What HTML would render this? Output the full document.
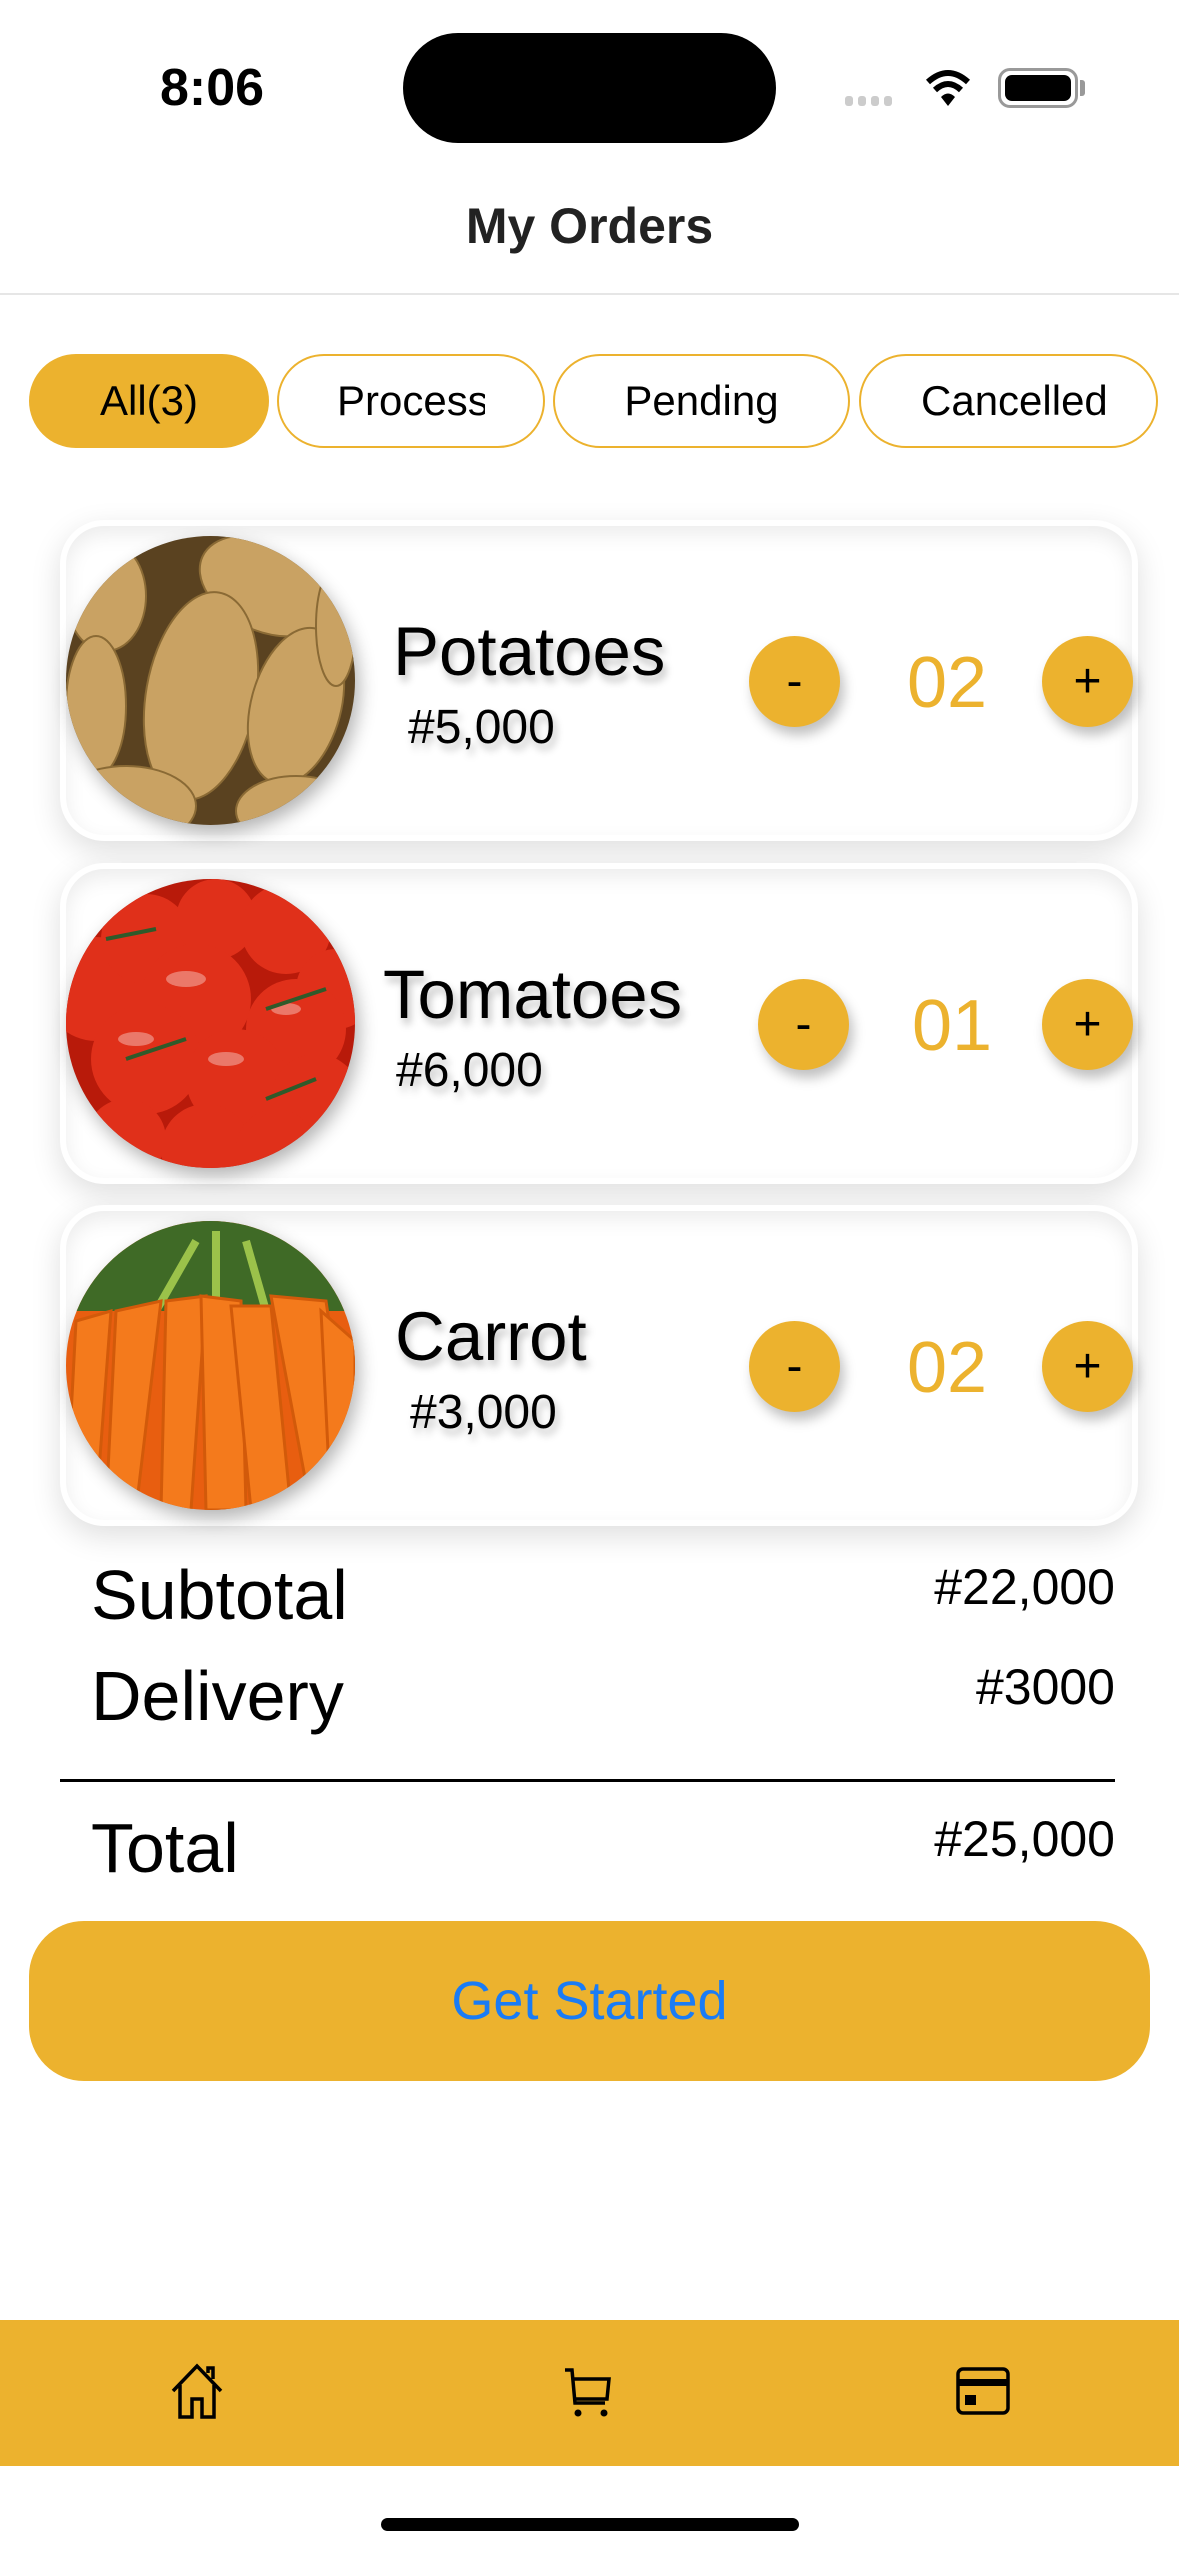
<!DOCTYPE html>
<html><head><meta charset="utf-8"><style>
*{margin:0;padding:0;box-sizing:border-box}
body{width:1179px;height:2556px;background:#fff;font-family:"Liberation Sans",sans-serif;position:relative;overflow:hidden;color:#000}
.a{position:absolute}
.tab{position:absolute;top:354px;height:94px;border:2px solid #ECB22E;border-radius:47px;font-size:42px;display:flex;align-items:center;justify-content:center;overflow:hidden;white-space:nowrap;background:#fff}
.card{position:absolute;left:60px;width:1078px;height:321px;border-radius:44px;background:#fff;box-shadow:0 10px 30px rgba(0,0,0,.13);border:6px solid #fff}
.card .in{position:absolute;inset:0;border-radius:38px;box-shadow:inset 0 8px 20px rgba(0,0,0,.08)}
.img{position:absolute;left:0px;top:10px;width:289px;height:289px;border-radius:50%;overflow:hidden;box-shadow:4px 8px 18px rgba(0,0,0,.3)}
.name{position:absolute;font-size:69px;text-shadow:3px 6px 8px rgba(0,0,0,.25)}
.price{position:absolute;font-size:48px;text-shadow:3px 6px 8px rgba(0,0,0,.25)}
.btn{position:absolute;width:91px;height:91px;border-radius:50%;background:#ECB22E;box-shadow:4px 8px 12px rgba(0,0,0,.25);font-size:48px;display:flex;align-items:center;justify-content:center}
.qty{position:absolute;font-size:72px;color:#ECB22E;width:140px;text-align:center}
.lbl{position:absolute;left:91px;font-size:70px}
.val{position:absolute;right:64px;font-size:50px}
</style></head><body>
<div class="a" style="left:160px;top:58px;font-size:52px;font-weight:bold">8:06</div>
<div class="a" style="left:403px;top:33px;width:373px;height:110px;border-radius:55px;background:#000"></div>
<div class="a" style="left:845px;top:96px;display:flex;gap:5px"><i style="width:8px;height:10px;background:#ccc;border-radius:3px"></i><i style="width:8px;height:10px;background:#ccc;border-radius:3px"></i><i style="width:8px;height:10px;background:#ccc;border-radius:3px"></i><i style="width:8px;height:10px;background:#ccc;border-radius:3px"></i></div>
<svg class="a" style="left:924px;top:68px" width="48" height="40" viewBox="0 0 48 40"><path d="M4 14 Q24 -4 44 14" stroke="#000" stroke-width="6" fill="none"/><path d="M11 22 Q24 10 37 22" stroke="#000" stroke-width="6" fill="none"/><path d="M17 29 Q24 22 31 29 L24 38Z" fill="#000"/></svg>
<div class="a" style="left:998px;top:68px;width:80px;height:40px;border:3px solid #999;border-radius:12px;padding:4px"><div style="background:#000;width:100%;height:100%;border-radius:7px"></div></div>
<div class="a" style="left:1080px;top:80px;width:5px;height:16px;background:#999;border-radius:0 3px 3px 0"></div>
<div class="a" style="left:0;width:1179px;top:197px;text-align:center;font-size:50px;font-weight:bold;color:#222">My Orders</div>
<div class="a" style="left:0;top:293px;width:1179px;height:2px;background:#e6e6e6"></div>

<div class="tab" style="left:29px;width:240px;background:#ECB22E;border:none">All(3)</div>
<div class="tab" style="left:277px;width:268px"><span style="width:148px;overflow:hidden;display:block">Processing</span></div>
<div class="tab" style="left:553px;width:297px">Pending</div>
<div class="tab" style="left:859px;width:299px;justify-content:flex-start;padding-left:60px"><span style="width:188px;overflow:hidden;display:block;flex:none">Cancelled</span></div>

<div class="card" style="top:520px"><div class="in"></div>
<div class="img" style="background:#5a4220"><svg width="289" height="289"><g fill="#c9a263" stroke="#8a6a35" stroke-width="2"><ellipse cx="200" cy="50" rx="70" ry="45" transform="rotate(25 200 50)"/><ellipse cx="40" cy="60" rx="40" ry="55"/><ellipse cx="135" cy="160" rx="55" ry="105" transform="rotate(10 135 160)"/><ellipse cx="230" cy="170" rx="45" ry="80" transform="rotate(15 230 170)"/><ellipse cx="30" cy="170" rx="30" ry="70"/><ellipse cx="60" cy="270" rx="70" ry="40"/><ellipse cx="230" cy="275" rx="60" ry="35"/><ellipse cx="270" cy="90" rx="20" ry="60"/></g></svg></div>
<div class="name" style="left:327px;top:86px">Potatoes</div>
<div class="price" style="left:342px;top:174px">#5,000</div>
<div class="btn" style="left:683px;top:110px">-</div>
<div class="qty" style="left:811px;top:116px">02</div>
<div class="btn" style="left:976px;top:110px">+</div>
</div>

<div class="card" style="top:863px"><div class="in"></div>
<div class="img" style="background:#b81a0a"><svg width="289" height="289"><g fill="#e0301a"><circle cx="30" cy="110" r="52"/><circle cx="80" cy="60" r="45"/><circle cx="150" cy="40" r="40"/><circle cx="220" cy="50" r="45"/><circle cx="270" cy="110" r="40"/><circle cx="130" cy="120" r="55"/><circle cx="230" cy="150" r="50"/><circle cx="80" cy="180" r="55"/><circle cx="170" cy="200" r="50"/><circle cx="250" cy="220" r="45"/><circle cx="60" cy="260" r="40"/><circle cx="140" cy="270" r="45"/><circle cx="210" cy="270" r="40"/></g><g fill="#fff" opacity=".35"><ellipse cx="120" cy="100" rx="20" ry="8"/><ellipse cx="70" cy="160" rx="18" ry="7"/><ellipse cx="160" cy="180" rx="18" ry="7"/><ellipse cx="220" cy="130" rx="15" ry="6"/></g><path d="M60 180 L120 160 M200 130 L260 110 M40 60 L90 50 M200 220 L250 200" stroke="#2f5a2a" stroke-width="4"/></svg></div>
<div class="name" style="left:317px;top:86px">Tomatoes</div>
<div class="price" style="left:330px;top:174px">#6,000</div>
<div class="btn" style="left:692px;top:110px">-</div>
<div class="qty" style="left:816px;top:116px">01</div>
<div class="btn" style="left:976px;top:110px">+</div>
</div>

<div class="card" style="top:1205px"><div class="in"></div>
<div class="img" style="background:#e85e10"><svg width="289" height="289"><rect width="289" height="90" fill="#3f6a26"/><g stroke="#9bc24a" stroke-width="8"><path d="M90 90 L130 20 M150 90 L150 10 M200 90 L180 20"/></g><g fill="#f47a1c" stroke="#d25a0a" stroke-width="3"><path d="M10 100 L45 90 L30 289 L0 289Z"/><path d="M50 90 L95 80 L70 289 L40 289Z"/><path d="M100 80 L140 75 L125 289 L95 289Z"/><path d="M135 75 L175 80 L180 289 L140 289Z"/><path d="M165 85 L205 85 L225 289 L185 289Z"/><path d="M205 75 L260 80 L285 250 L245 289Z"/><path d="M255 90 L289 120 L289 289 L265 289Z"/></g></svg></div>
<div class="name" style="left:329px;top:86px">Carrot</div>
<div class="price" style="left:344px;top:174px">#3,000</div>
<div class="btn" style="left:683px;top:110px">-</div>
<div class="qty" style="left:811px;top:116px">02</div>
<div class="btn" style="left:976px;top:110px">+</div>
</div>

<div class="lbl" style="top:1555px">Subtotal</div>
<div class="val" style="top:1558px">#22,000</div>
<div class="lbl" style="top:1656px">Delivery</div>
<div class="val" style="top:1658px">#3000</div>
<div class="a" style="left:60px;top:1779px;width:1055px;height:3px;background:#000"></div>
<div class="lbl" style="top:1808px">Total</div>
<div class="val" style="top:1810px">#25,000</div>

<div class="a" style="left:29px;top:1921px;width:1121px;height:160px;border-radius:55px;background:#ECB22E;display:flex;align-items:center;justify-content:center;font-size:54px;color:#1a7cf5">Get Started</div>

<div class="a" style="left:0;top:2320px;width:1179px;height:146px;background:#ECB22E"></div>
<svg class="a" style="left:169px;top:2363px" width="56" height="58" viewBox="0 0 56 58"><path d="M4 28 L28 3 L52 28 M11 22 V54 H23 V36 H33 V54 H45 V22 M39 10 V5 H44 V16" fill="none" stroke="#000" stroke-width="3.5"/></svg>
<svg class="a" style="left:563px;top:2367px" width="50" height="52" viewBox="0 0 50 52"><path d="M2 3 H9 L12 36 H42 M10 12 H46 L44 32 H12" fill="none" stroke="#000" stroke-width="3.5"/><circle cx="15" cy="46" r="3.5"/><circle cx="41" cy="46" r="3.5"/></svg>
<svg class="a" style="left:956px;top:2367px" width="54" height="48" viewBox="0 0 54 48"><rect x="2" y="2" width="50" height="44" rx="5" fill="none" stroke="#000" stroke-width="3.5"/><rect x="2" y="12" width="50" height="7" fill="#000"/><rect x="9" y="28" width="11" height="10" fill="#000"/></svg>
<div class="a" style="left:381px;top:2518px;width:418px;height:13px;border-radius:7px;background:#000"></div>
</body></html>
